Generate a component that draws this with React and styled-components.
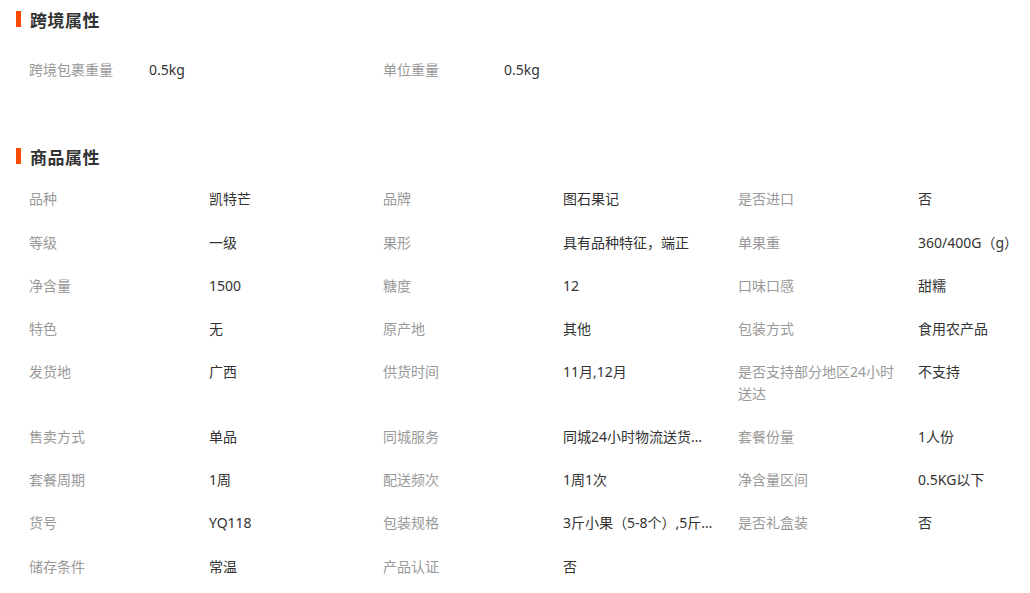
import React from 'react';
import styled, { createGlobalStyle } from 'styled-components';

const GlobalStyle = createGlobalStyle`
  body {
    margin: 0;
    background: #fff;
    font-family: "Noto Sans", "Noto Sans CJK SC", sans-serif;
  }
`;

const Page = styled.div`
  padding: 8px 0 0 16px;
  width: 1030px;
  box-sizing: border-box;
`;

const Section = styled.section`
  margin-bottom: ${props => props.gap || 0}px;
`;

const Title = styled.h3`
  display: flex;
  align-items: center;
  gap: 9px;
  margin: 0;
  height: 22px;
  font-size: 17px;
  font-weight: bold;
  color: #333;
  letter-spacing: 0.5px;
  font-family: "Noto Sans CJK SC", sans-serif;

  &::before {
    content: "";
    display: block;
    width: 5px;
    height: 16px;
    background-color: #ff4a00;
  }
`;

const Table = styled.div`
  display: grid;
  grid-template-columns: ${props => props.cols};
  margin: ${props => props.top}px 0 0 13px;
  font-size: 14px;
  line-height: 21.25px;
  font-family: "Noto Sans", "Noto Sans CJK SC", sans-serif;
`;

const Label = styled.div`
  padding: 11px 15px 11px 0;
  color: #999;
`;

const Value = styled.div`
  padding: 11px ${props => (props.last ? 0 : 22)}px 11px 0;
  color: #333;
  white-space: nowrap;
  overflow: hidden;
  text-overflow: ellipsis;
`;

const crossBorder = [
  ['跨境包裹重量', '0.5kg'],
  ['单位重量', '0.5kg'],
];

const attrs = [
  ['品种', '凯特芒'], ['品牌', '图石果记'], ['是否进口', '否'],
  ['等级', '一级'], ['果形', '具有品种特征，端正'], ['单果重', '360/400G（g）'],
  ['净含量', '1500'], ['糖度', '12'], ['口味口感', '甜糯'],
  ['特色', '无'], ['原产地', '其他'], ['包装方式', '食用农产品'],
  ['发货地', '广西'], ['供货时间', '11月,12月'], ['是否支持部分地区24小时送达', '不支持'],
  ['售卖方式', '单品'], ['同城服务', '同城24小时物流送货上门'], ['套餐份量', '1人份'],
  ['套餐周期', '1周'], ['配送频次', '1周1次'], ['净含量区间', '0.5KG以下'],
  ['货号', 'YQ118'], ['包装规格', '3斤小果（5-8个）,5斤中果（8-12个）'], ['是否礼盒装', '否'],
  ['储存条件', '常温'], ['产品认证', '否'],
];

const Pairs = ({ items, perRow }) =>
  items.map(([k, v], i) => (
    <React.Fragment key={k}>
      <Label>{k}</Label>
      <Value title={v} last={i % perRow === perRow - 1}>{v}</Value>
    </React.Fragment>
  ));

export default function App() {
  return (
    <Page>
      <GlobalStyle />
      <Section gap={54}>
        <Title>跨境属性</Title>
        <Table cols="120px 234px 121px 1fr" top={18}>
          <Pairs items={crossBorder} perRow={2} />
        </Table>
      </Section>
      <Section>
        <Title>商品属性</Title>
        <Table cols="180px 174px 180px 175px 180px 1fr" top={10}>
          <Pairs items={attrs} perRow={3} />
        </Table>
      </Section>
    </Page>
  );
}
